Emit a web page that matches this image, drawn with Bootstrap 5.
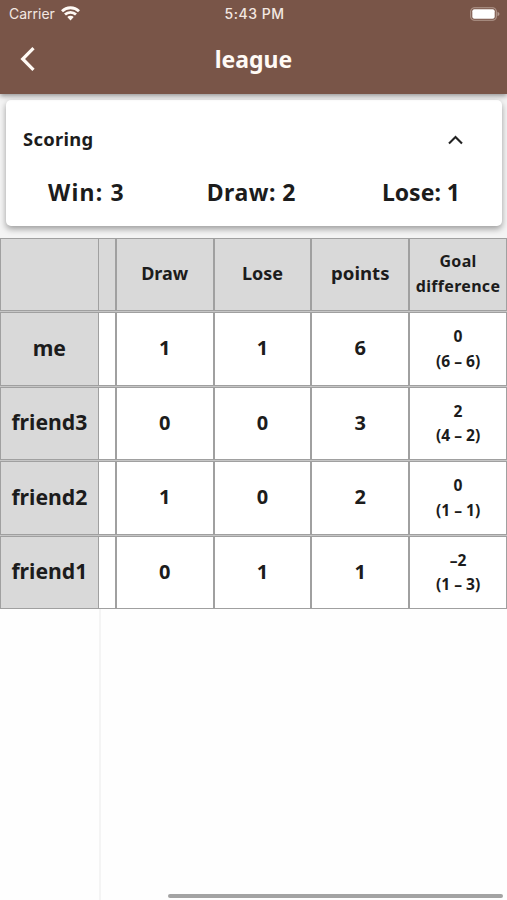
<!DOCTYPE html>
<html lang="en">
<head>
<meta charset="utf-8">
<meta name="viewport" content="width=device-width, initial-scale=1">
<title>league</title>
<link href="https://cdn.jsdelivr.net/npm/bootstrap@5.3.0/dist/css/bootstrap.min.css" rel="stylesheet">
<style>
body { font-family: "Noto Sans", sans-serif; font-weight: 700; color: #1c1c1c; background: #fefefe; height: 900px; overflow: hidden; }
.app-header { background: #795548; height: 94px; color: #fffaf5; box-shadow: 0 2px 5px rgba(0,0,0,.4); z-index: 2; }
.status-bar { height: 27px; padding: 0 7px 0 9px; font-family: Inter, sans-serif; font-size: 14px; font-weight: 400; color: #f3e8e2; }
.status-bar > * { flex: 1 1 0; }
.carrier { gap: 6px; }
.clock { font-weight: 500; font-size: 14px; letter-spacing: .5px; }
.title-bar { height: 63px; padding: 0 20px; }
.title-bar > * { flex: 1 1 0; }
.title-text { font-size: 23px; line-height: 24px; }
.back-icon { margin-top: 1px; }
.top-area { background: #f4f4f4; height: 143.6px; padding: 6px 5px 0 6px; }
.score-panel { height: 126px; border-radius: 5px; background: #fff; box-shadow: 0 3px 6px rgba(0,0,0,.36); }
.score-head { height: 72px; padding: 6px 39px 0 17px; font-size: 18.4px; }
.score-head span { letter-spacing: .3px; }
.score-head svg { margin-top: 1px; }
.score-values { font-size: 23px; line-height: 41px; padding: 0 42px; }
.win-value { letter-spacing: 1.2px; margin-right: -4px; }
.draw-value { letter-spacing: .5px; }
.lose-value { letter-spacing: 0; }
.league-grid { display: grid; grid-template-columns: 98.7px 17.1px repeat(4, 97.8px); grid-template-rows: repeat(5, 73.5px); row-gap: 1px; background: #c6c6c6; height: 371.5px; }
.cell { border: 1px solid #a0a0a0; background: #fff; display: flex; align-items: center; justify-content: center; text-align: center; font-size: 20px; line-height: 24.5px; padding-bottom: 1px; }
.cell.head { background: #d9d9d9; font-size: 18px; padding-bottom: 2px; }
.cell.team { background: #d9d9d9; font-size: 21.2px; padding-bottom: 2px; }
.cell.sliver { border-left: 0; }
.cell.points-title { font-size: 18.6px; }
.cell.goals { font-size: 15.6px; padding-bottom: .4px; }
.cell.head.goals { font-size: 16px; letter-spacing: .3px; padding-bottom: 1px; }
.side-space { width: 101px; border-right: 2px solid #f4f4f4; }
.scroll-thumb { width: 335px; height: 4px; border-radius: 2px; background: #a3a3a3; margin: 0 4px 2px 0; }
</style>
<script src="https://cdn.jsdelivr.net/npm/bootstrap@5.3.0/dist/js/bootstrap.bundle.min.js"></script>
</head>
<body class="d-flex flex-column">
<header class="app-header position-relative flex-shrink-0">
  <div class="status-bar d-flex align-items-center">
    <div class="carrier d-flex align-items-center"><span>Carrier</span>
      <svg width="19" height="15" viewBox="0 0 19 15" fill="none" stroke="#fffaf5" stroke-width="2.8"><path d="M1 5.2a12.2 12.2 0 0 1 17 0M4 8.6a8 8 0 0 1 11 0"/><path d="M6.3 11.1a4.6 4.6 0 0 1 6.4 0L9.5 14.4z" fill="#fffaf5" stroke="none"/></svg>
    </div>
    <div class="clock text-center">5:43 PM</div>
    <div class="d-flex justify-content-end">
      <svg width="30" height="14" viewBox="0 0 30 14"><rect x=".7" y=".7" width="25.6" height="12.6" rx="3.8" fill="none" stroke="#b39a8f" stroke-width="1.1"/><rect x="2.3" y="2.3" width="22.4" height="9.4" rx="2" fill="#fff"/><path d="M27.5 4.8q2 .7 2 2.2t-2 2.2z" fill="#b39a8f"/></svg>
    </div>
  </div>
  <div class="title-bar d-flex align-items-center">
    <div><svg class="back-icon d-block" width="16" height="24" viewBox="0 0 16 24" fill="none" stroke="#fffaf5" stroke-width="3.2"><path d="M13.5 1.2 2.7 12 13.5 22.8"/></svg></div>
    <div class="title-text text-center">league</div>
    <div></div>
  </div>
</header>
<section class="top-area flex-shrink-0">
  <div class="score-panel">
    <div class="score-head d-flex align-items-center justify-content-between">
      <span>Scoring</span>
      <svg width="15" height="10" viewBox="0 0 15 10" fill="none" stroke="#222" stroke-width="2.1"><path d="M1 8.6 7.5 2l6.5 6.6"/></svg>
    </div>
    <div class="score-values d-flex justify-content-between"><span class="win-value">Win: 3</span><span class="draw-value">Draw: 2</span><span class="lose-value">Lose: 1</span></div>
  </div>
</section>
<main class="league-grid flex-shrink-0">
  <div class="cell head"></div><div class="cell head sliver"></div><div class="cell head">Draw</div><div class="cell head">Lose</div><div class="cell head points-title">points</div><div class="cell head goals">Goal<br>difference</div>
  <div class="cell team">me</div><div class="cell sliver"></div><div class="cell">1</div><div class="cell">1</div><div class="cell">6</div><div class="cell goals">0<br>(6 – 6)</div>
  <div class="cell team">friend3</div><div class="cell sliver"></div><div class="cell">0</div><div class="cell">0</div><div class="cell">3</div><div class="cell goals">2<br>(4 – 2)</div>
  <div class="cell team">friend2</div><div class="cell sliver"></div><div class="cell">1</div><div class="cell">0</div><div class="cell">2</div><div class="cell goals">0<br>(1 – 1)</div>
  <div class="cell team">friend1</div><div class="cell sliver"></div><div class="cell">0</div><div class="cell">1</div><div class="cell">1</div><div class="cell goals">–2<br>(1 – 3)</div>
</main>
<div class="d-flex flex-grow-1 justify-content-between align-items-end">
  <div class="side-space align-self-stretch"></div>
  <div class="scroll-thumb"></div>
</div>
</body>
</html>
